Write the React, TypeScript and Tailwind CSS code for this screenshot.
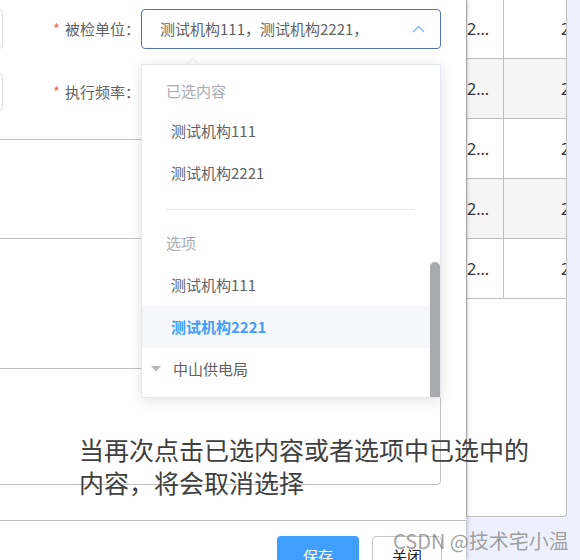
const rows = [0, 1, 2, 3, 4]

function FormRow({ className, label, children }: { className: string; label: string; children: React.ReactNode }) {
  return (
    <div className={`flex shrink-0 items-center ${className}`}>
      <div className="ml-[-100px] h-full w-[103px] shrink-0 rounded border border-[#dcdfe6]" />
      <div className="flex w-[138px] shrink-0 justify-end pr-[1px] text-[15px] text-[#606266]">
        <span className="mr-[5px] text-[#f56c6c]">*</span>
        {label}：
      </div>
      {children}
    </div>
  )
}

function Dialog() {
  return (
    <div className="relative z-10 flex h-full w-[466px] shrink-0 flex-col bg-white shadow-[1px_0_4px_rgba(0,0,0,0.25)]">
      <FormRow className="mt-[9px] h-[40px]" label="被检单位">
        <div className="flex h-full w-[300px] items-center justify-between rounded border border-[#4f74b3] pl-[18px] pr-[15px] text-[15px] text-[#606266]">
          <span>测试机构111，测试机构2221，</span>
          <svg width="13" height="8" viewBox="0 0 13 8" fill="none">
            <polyline points="1,7 6.5,1.5 12,7" stroke="#7eb6f5" strokeWidth="1.4" />
          </svg>
        </div>
      </FormRow>
      <FormRow className="mt-[24px] h-[38px]" label="执行频率">
        <div className="h-full w-[300px] rounded border border-[#dcdfe6]" />
      </FormRow>
      <div className="ml-[-10px] mt-[28px] h-[100px] w-[451px] shrink-0 border border-[#c0c0c0]" />
      <div className="ml-[-10px] mt-[129px] h-[117px] w-[451px] shrink-0 rounded-br border border-[#c0c0c0]" />
      <div className="mt-[35px] flex shrink-0 border-t border-[#c0c0c0] pt-[15px]">
        <button className="ml-[277px] h-[40px] w-[82px] rounded bg-[#409eff] text-[15px] text-white">保存</button>
        <button className="ml-[13px] h-[40px] w-[70px] rounded border border-[#c8c8c8] bg-white text-[15px] text-[#222]">关闭</button>
      </div>
    </div>
  )
}

function Table() {
  return (
    <div className="flex-1">
      <div className="h-[517px] w-[101px] overflow-hidden rounded-br-[4px] border border-t-0 border-[#c0c0c0] bg-white font-['Noto_Sans',sans-serif] text-[16px] text-[#303133]">
        <div className="mt-[-1px]">
          {rows.map((r) => (
            <div key={r} className={`flex h-[60px] border-b border-[#c0c0c0] ${r % 2 === 1 ? 'bg-[#f5f5f5]' : 'bg-white'}`}>
              <div className="flex w-[37px] items-center border-r border-[#c0c0c0]">2...</div>
              <div className="flex flex-1 items-center overflow-hidden whitespace-nowrap pl-[57px]">20</div>
            </div>
          ))}
        </div>
      </div>
    </div>
  )
}

function Option({ text, active }: { text: string; active?: boolean }) {
  return (
    <div
      className={`flex h-[42px] shrink-0 items-center pl-[29px] text-[15px] ${
        active ? 'bg-[#f5f7fa] font-bold text-[#409eff]' : 'text-[#606266]'
      }`}
    >
      {text}
    </div>
  )
}

function Dropdown() {
  return (
    <div className="absolute left-[141px] top-[64px] z-20">
      <svg className="absolute left-[45px] top-[-6px]" width="14" height="7" viewBox="0 0 14 7">
        <polygon points="0,7 7,0.5 14,7" fill="white" stroke="#e4e7ed" />
        <rect x="0" y="6" width="14" height="2" fill="white" />
      </svg>
      <div className="relative flex h-[334px] w-[300px] flex-col overflow-hidden border border-[#e4e7ed] bg-white shadow-[0_2px_12px_rgba(0,0,0,0.12)]">
        <div className="mt-[11px] h-[30px] shrink-0 pl-[24px] text-[15px] leading-[30px] text-[#a8abb2]">已选内容</div>
        <div className="mt-[4px] flex flex-col">
          <Option text="测试机构111" />
          <Option text="测试机构2221" />
        </div>
        <div className="ml-[24px] mt-[15px] h-px w-[248px] shrink-0 bg-[#e4e7ed]" />
        <div className="mt-[18px] h-[30px] shrink-0 pl-[24px] text-[15px] leading-[30px] text-[#a8abb2]">选项</div>
        <div className="mt-[6px] flex flex-col">
          <Option text="测试机构111" />
          <Option text="测试机构2221" active />
          <div className="flex h-[42px] shrink-0 items-center pl-[9px] text-[15px] text-[#606266]">
            <svg width="10" height="6" viewBox="0 0 10 6" className="mr-[12px]">
              <polygon points="0,0 10,0 5,5.5" fill="#b4b6bb" />
            </svg>
            中山供电局
          </div>
        </div>
        <div className="absolute bottom-0 right-0 h-[135px] w-[10px] rounded-t-full bg-[#a9aaae]" />
      </div>
    </div>
  )
}

export default function App() {
  return (
    <div className="relative flex h-[560px] w-[580px] overflow-hidden bg-[#eef1fd] font-['Noto_Sans_CJK_SC',sans-serif]">
      <Dialog />
      <Table />
      <Dropdown />
      <p className="absolute left-[79px] top-[433px] z-30 text-[25px] leading-[33px] text-[#404040]">
        当再次点击已选内容或者选项中已选中的
        <br />
        内容，将会取消选择
      </p>
      <div className="absolute left-[393px] top-[526px] z-30 text-[20px] text-[rgba(110,110,110,0.65)]">
        CSDN @技术宅小温
      </div>
    </div>
  )
}
